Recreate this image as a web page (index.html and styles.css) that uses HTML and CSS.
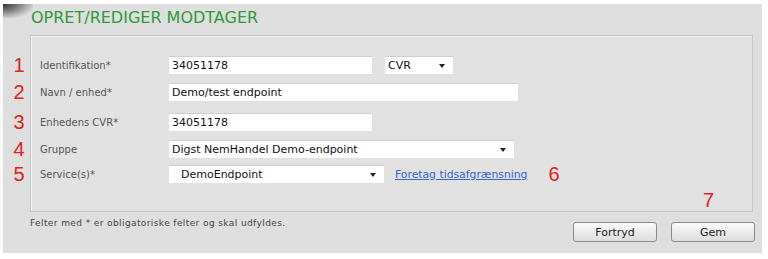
FILE: index.html
```html
<!DOCTYPE html>
<html lang="da">
<head>
    <meta charset="UTF-8">
    <title>Opret/rediger modtager</title>
    <link rel="stylesheet" href="styles.css">
</head>
<body>
    <div class="panel">
        <h2 class="title">OPRET/REDIGER MODTAGER</h2>

        <div class="fieldset">
            <div class="row row-1">
                <span class="mark">1</span>
                <label class="label" for="ident">Identifikation*</label>
                <input class="field field-mid" id="ident" type="text" value="34051178">
                <div class="select select-cvr"><span>CVR</span><span class="arrow"></span></div>
            </div>
            <div class="row row-2">
                <span class="mark">2</span>
                <label class="label" for="navn">Navn / enhed*</label>
                <input class="field field-wide" id="navn" type="text" value="Demo/test endpoint">
            </div>
            <div class="row row-3">
                <span class="mark">3</span>
                <label class="label" for="cvr">Enhedens CVR*</label>
                <input class="field field-mid" id="cvr" type="text" value="34051178">
            </div>
            <div class="row row-4">
                <span class="mark">4</span>
                <span class="label">Gruppe</span>
                <div class="select select-group"><span>Digst NemHandel Demo-endpoint</span><span class="arrow"></span></div>
            </div>
            <div class="row row-5">
                <span class="mark">5</span>
                <span class="label">Service(s)*</span>
                <div class="select select-service"><span>DemoEndpoint</span><span class="arrow"></span></div>
                <a class="link" href="#">Foretag tidsafgrænsning</a>
                <span class="mark mark-inline">6</span>
            </div>
        </div>

        <div class="footer">
            <p class="note">Felter med * er obligatoriske felter og skal udfyldes.</p>
            <div class="buttons">
                <button class="btn">Fortryd</button>
                <button class="btn">Gem</button>
                <span class="mark mark-save">7</span>
            </div>
        </div>
    </div>
</body>
</html>
```

FILE: styles.css
```css
body {
    margin: 0;
    padding: 3px 6px 5px 3px;
    background-color: #ffffff;
    font-family: Tahoma, "DejaVu Sans", sans-serif;
}
.panel {
    position: relative;
    width: 723px;
    height: 248px;
    padding: 1px 9px 0 27px;
    margin-top: 1px;
    background-color: #dedede;
}
.panel::before {
    content: "";
    position: absolute;
    left: 0;
    top: 0;
    width: 30px;
    height: 14px;
    background: radial-gradient(ellipse at 0 0, #2e2e2e 0%, #7a7a7a 35%, rgba(222, 222, 222, 0) 78%);
}
.title {
    margin: 0;
    padding: 3px 0 0 1px;
    height: 27px;
    font-family: "DejaVu Sans", sans-serif;
    font-size: 16px;
    font-weight: normal;
    color: #2e9a3c;
}
.fieldset {
    height: 155px;
    padding: 20px 0 0 9px;
    border: 1px solid #c6c6c6;
    box-shadow: inset 1px 1px 0 #f2f2f2;
    background-color: #e1e1e1;
}
.row {
    display: flex;
    align-items: center;
    height: 18px;
    margin-bottom: 9px;
}
.row-2 {
    margin-bottom: 12px;
}
.row-4 {
    margin-bottom: 7px;
}
.mark {
    width: 18px;
    margin-left: -30px;
    margin-right: 12px;
    text-align: center;
    font-family: "Liberation Sans", Arial, sans-serif;
    font-size: 20px;
    color: #e3211f;
}
.label {
    width: 129px;
    font-family: "DejaVu Sans", sans-serif;
    font-size: 10px;
    color: #555555;
}
.field {
    height: 18px;
    padding: 0 3px;
    border: none;
    border-top: 1px solid #cfcfcf;
    box-sizing: border-box;
    background-color: #ffffff;
    font-family: "DejaVu Sans", sans-serif;
    font-size: 11px;
    color: #111111;
}
.field-mid {
    width: 203px;
}
.field-wide {
    width: 349px;
}
.select {
    display: flex;
    align-items: center;
    justify-content: space-between;
    height: 18px;
    padding: 0 8px 0 3px;
    box-sizing: border-box;
    background-color: #ffffff;
    border-top: 1px solid #cfcfcf;
    font-family: "DejaVu Sans", sans-serif;
    font-size: 11px;
    color: #111111;
}
.select-cvr {
    width: 68px;
    margin-left: 13px;
}
.select-group {
    width: 345px;
}
.select-service {
    width: 215px;
    padding-left: 12px;
}
.arrow {
    width: 0;
    height: 0;
    border-left: 3px solid transparent;
    border-right: 3px solid transparent;
    border-top: 4px solid #222222;
}
.link {
    margin-left: 11px;
    font-family: "DejaVu Sans", sans-serif;
    font-size: 10.8px;
    color: #3b63c8;
}
.mark-inline {
    width: auto;
    margin: 0 0 0 21px;
}
.footer {
    display: flex;
    justify-content: space-between;
    align-items: flex-start;
    padding-top: 10px;
}
.note {
    margin: -4px 0 0 0;
    font-family: "DejaVu Sans", sans-serif;
    font-size: 9px;
    letter-spacing: 0.4px;
    color: #444444;
}
.buttons {
    position: relative;
    display: flex;
    gap: 14px;
    margin-right: -2px;
}
.btn {
    width: 84px;
    height: 20px;
    padding: 0;
    border: 1px solid #8c8c8c;
    border-radius: 3px;
    background: linear-gradient(#fbfbfb, #dcdcdc);
    font-family: "DejaVu Sans", sans-serif;
    font-size: 11px;
    font-weight: normal;
    color: #222222;
}
.mark-save {
    position: absolute;
    left: 130px;
    top: -33px;
    width: auto;
    margin: 0;
}
```
